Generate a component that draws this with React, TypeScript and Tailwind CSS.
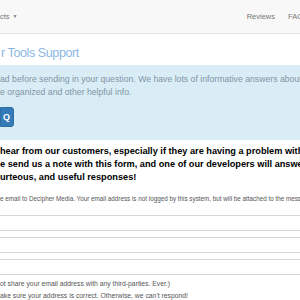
import React from 'react';

const fields = [1, 2, 3];

export default function App() {
  return (
    <div
      className="w-[300px] h-[300px] overflow-hidden bg-white whitespace-nowrap"
      style={{ fontFamily: '"Liberation Sans", Arial, sans-serif' }}
    >
      <nav className="flex h-[34px] items-center justify-between border-b border-[#e4e4e4] bg-[#f8f8f8] text-[7.5px] text-[#777]">
        <div className="flex items-center gap-[3px]">
          <span>cts</span>
          <span className="text-[5px]">▼</span>
        </div>
        <div className="flex items-center gap-[13px] -mr-[3px]">
          <span>Reviews</span>
          <span>FAQ</span>
        </div>
      </nav>

      <h1 className="mt-[9px] h-[22px] pl-[1px] text-[12.5px] font-light leading-[20px] tracking-[-0.4px] text-[#8ab6e4]">
        r Tools Support
      </h1>

      <div className="bg-[#d9edf7] pt-[8px] pb-[13px] text-[8.7px] leading-[13px] text-[#8394a4]">
        <p>ad before sending in your question. We have lots of informative answers about</p>
        <p>e organized and other helpful info.</p>
        <div className="mt-[8px] flex h-[20px] w-[14px] items-center justify-end rounded-r-[3px] border border-[#2e6da4] bg-[#337ab7] pr-[3px] text-[9px] font-bold text-white">
          Q
        </div>
      </div>

      <div className="mt-[5px] h-[39px] text-[9.2px] font-bold leading-[13px] text-black">
        <p>hear from our customers, especially if they are having a problem with</p>
        <p>e send us a note with this form, and one of our developers will answer</p>
        <p>urteous, and useful responses!</p>
      </div>

      <p className="mt-[10px] h-[10px] text-[6.3px] leading-[10px] text-[#555]">
        e email to Decipher Media. Your email address is not logged by this system, but will be attached to the message
      </p>

      <div className="mt-[11px] flex flex-col gap-[6px]">
        {fields.map((f) => (
          <div key={f} className="-ml-[4px] h-[16px] w-[320px] shrink-0 border border-[#d6d6d6] bg-white" />
        ))}
      </div>

      <div className="mt-[3px] text-[6.8px] leading-[12px] text-[#555]">
        <p>ot share your email address with any third-parties. Ever.)</p>
        <p>ake sure your address is correct. Otherwise, we can't respond!</p>
      </div>
    </div>
  );
}
